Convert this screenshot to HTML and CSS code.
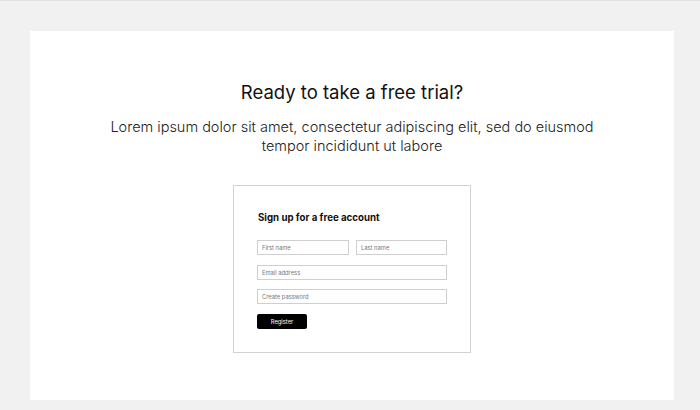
FILE: index.html
```html
<!DOCTYPE html>
<html lang="en">
<head>
<meta charset="utf-8">
<title>Free trial</title>
<link rel="stylesheet" href="styles.css">
</head>
<body>
<div class="topline"></div>
<main class="panel">
  <h1 class="title">Ready to take a free trial?</h1>
  <p class="lead">Lorem ipsum dolor sit amet, consectetur adipiscing elit, sed do eiusmod<br>tempor incididunt ut labore</p>
  <form class="card" onsubmit="return false">
    <h2 class="card-title">Sign up for a free account</h2>
    <div class="row">
      <input class="field" type="text" placeholder="First name">
      <input class="field" type="text" placeholder="Last name">
    </div>
    <input class="field field-email" type="email" placeholder="Email address">
    <input class="field field-pass" type="password" placeholder="Create password">
    <button class="btn" type="submit">Register</button>
  </form>
</main>
</body>
</html>
```
FILE: styles.css
```css
* { box-sizing: border-box; }
html, body { margin: 0; padding: 0; }
body {
  background: #f1f1f1;
  font-family: Inter, "Open Sans", sans-serif;
  color: #111;
  height: 410px;
  overflow: hidden;
}
.topline { height: 1px; background: #e3e3e3; }
.panel {
  background: #fff;
  margin: 30px 26px 0 30px;
  height: 369px;
  display: flex;
  flex-direction: column;
  align-items: center;
  padding-top: 45px;
}
.title {
  margin: 0;
  font-size: 18.5px;
  font-weight: 400;
  line-height: 32px;
  color: #111;
}
.lead {
  margin: 9px 0 0;
  font-size: 14.5px;
  font-weight: 300;
  line-height: 19px;
  text-align: center;
  color: #222;
}
.card {
  margin-top: 30px;
  width: 238px;
  height: 168px;
  border: 1px solid #d2d2d2;
  padding: 26px 23px 0 23px;
  display: flex;
  flex-direction: column;
}
.card-title {
  margin: 0 0 16px 1px;
  font-size: 9.7px;
  font-weight: 700;
  line-height: 12px;
  color: #111;
}
.row { display: flex; gap: 7px; }
.row .field { width: 92px; }
.row .field + .field { width: 91px; }
.field {
  width: 190px;
  height: 15px;
  border: 1px solid #cfcfcf;
  padding: 0 4px;
  font-family: inherit;
  font-size: 5.8px;
  outline: none;
  background: #fff;
}
.field::placeholder { color: #777; }
.field-email { margin-top: 10px; }
.field-pass { margin-top: 9px; }
.btn {
  width: 50px;
  height: 15px;
  margin-top: 10px;
  background: #000;
  color: #fff;
  border: none;
  border-radius: 2px;
  font-family: inherit;
  font-size: 5.8px;
  padding: 0;
}
```
